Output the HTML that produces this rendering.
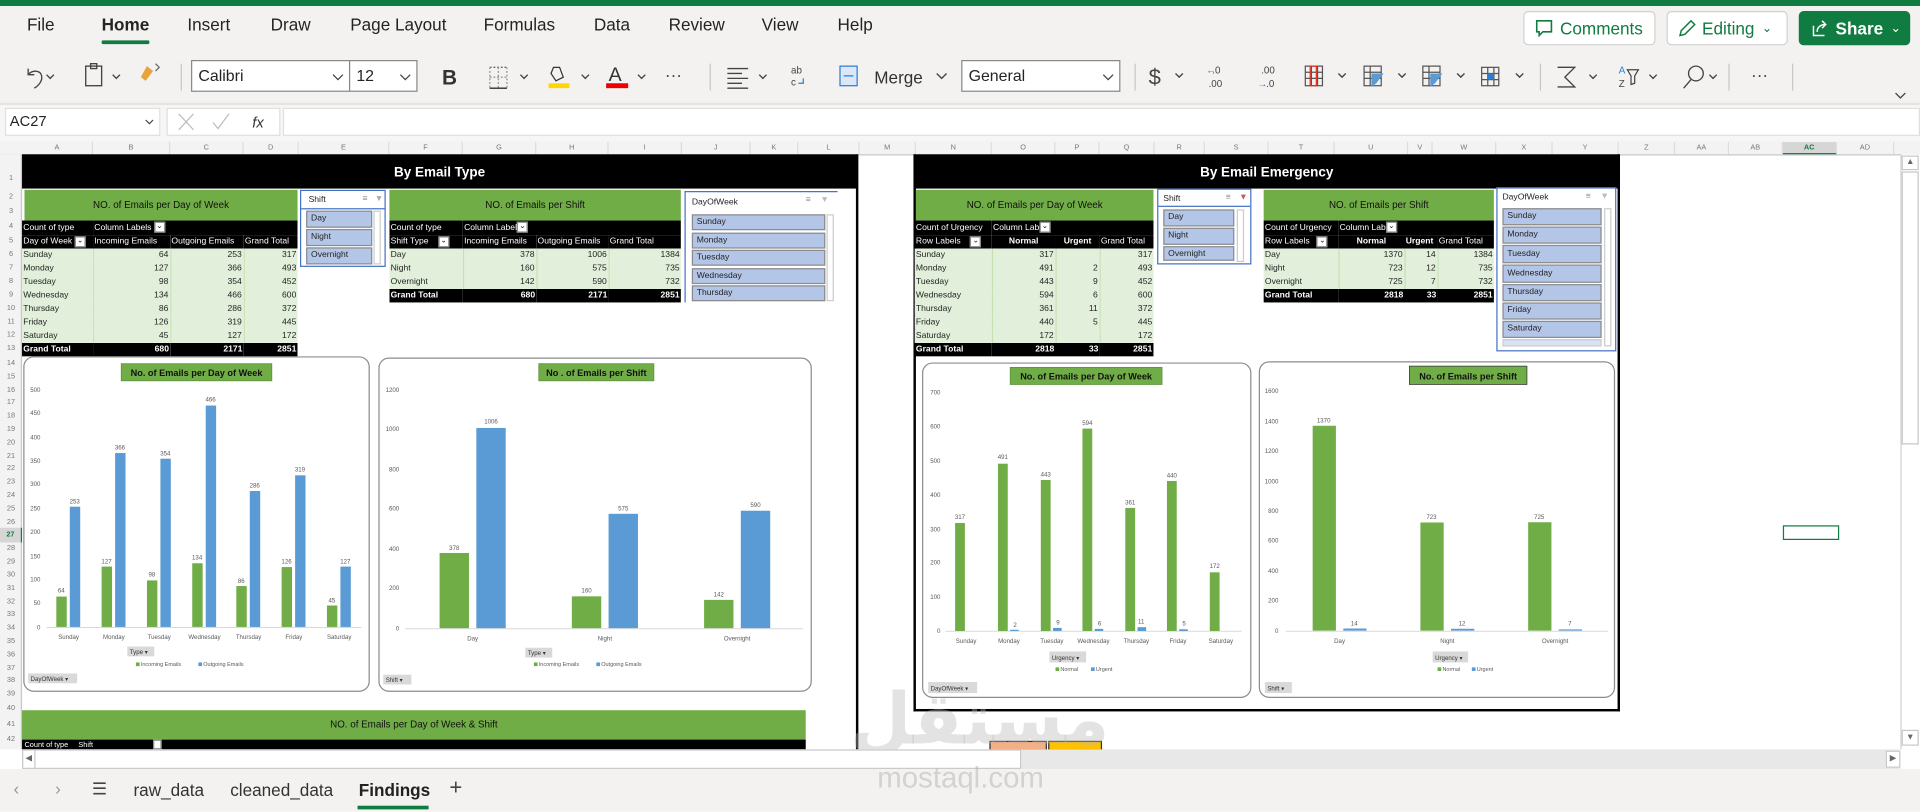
<!DOCTYPE html>
<html><head><meta charset="utf-8">
<style>
*{margin:0;padding:0;box-sizing:border-box}
html,body{width:1920px;height:812px;overflow:hidden;background:#fff}
#s{position:absolute;left:0;top:0;width:1568px;height:663px;transform:scale(1.22449);transform-origin:0 0;font-family:"Liberation Sans",sans-serif;color:#242424;overflow:hidden;background:#fff}
.a{position:absolute}
.tab{position:absolute;top:12px;font-size:14px;color:#242424}
.btn{position:absolute;top:9px;height:28px;border:1px solid #d1d1d1;border-radius:4px;background:#fff;font-size:14px;color:#107c41;display:flex;align-items:center;padding-left:8px}
.box{position:absolute;background:#fff;border:1px solid #8a8886;font-size:13px;padding-left:5px;line-height:24px}
.ch{position:absolute;top:116px;height:10px;font-size:6px;color:#777;text-align:center;line-height:10px;border-right:1px solid #dcdcdc}
.rh{position:absolute;left:0;width:18px;font-size:6px;color:#777;text-align:center}
table.pv{position:absolute;border-collapse:collapse;table-layout:fixed;font-size:7px}
table.pv td{height:11px;line-height:11px;padding:0 1px;white-space:nowrap;overflow:hidden}
tr.h td{background:#000;color:#fff}
tr.d td{background:#e2efda;border-left:1px solid #c6e0b4}
tr.d td:first-child{border-left:none}
tr.g td{background:#000;color:#fff;font-weight:bold}
td.r{text-align:right}
.dd{display:inline-block;width:9px;height:9px;background:#fff;border:1px solid #888;vertical-align:middle;font-size:6px;color:#000;text-align:center;line-height:7px}
.gh{position:absolute;background:#70ad47;font-size:8px;color:#111;text-align:center}
.sl{position:absolute;background:#fff;border:1px solid #4472c4;font-size:7px}
.si{position:absolute;background:#b4c6e7;border:1px solid #8c8c8c;font-size:7px;padding-left:3px;color:#222}
svg text{font-family:"Liberation Sans",sans-serif}
</style></head><body>
<div id="s">
<div class="a" style="left:0;top:0;width:1568px;height:5px;background:#107c41"></div>
<div class="a" style="left:0;top:5px;width:1568px;height:80px;background:#f3f2f1"></div>
<div class="a" style="left:0;top:84px;width:1568px;height:2px;background:#e6e4e2"></div>
<div class="a" style="left:0;top:86px;width:1568px;height:30px;background:#f6f6f6"></div>
<div class="tab" style="left:22px">File</div>
<div class="tab" style="left:83px;font-weight:bold">Home</div>
<div class="a" style="left:83px;top:33px;width:39px;height:3px;background:#107c41;border-radius:1px"></div>
<div class="tab" style="left:153px">Insert</div>
<div class="tab" style="left:221px">Draw</div>
<div class="tab" style="left:286px">Page Layout</div>
<div class="tab" style="left:395px">Formulas</div>
<div class="tab" style="left:485px">Data</div>
<div class="tab" style="left:546px">Review</div>
<div class="tab" style="left:622px">View</div>
<div class="tab" style="left:684px">Help</div>
<div class="btn" style="left:1244px;width:108px"><svg width="16" height="16" viewBox="0 0 16 16"><path d="M2 2h12v9H7l-3 3v-3H2z" fill="none" stroke="#107c41" stroke-width="1.3"/></svg><span style="margin-left:5px">Comments</span></div>
<div class="btn" style="left:1361px;width:99px"><svg width="16" height="16" viewBox="0 0 16 16"><path d="M11 2l3 3-8 8-4 1 1-4z" fill="none" stroke="#107c41" stroke-width="1.2"/></svg><span style="margin-left:4px">Editing</span><span style="margin-left:6px;font-size:10px">&#8964;</span></div>
<div class="btn" style="left:1469px;width:91px;background:#107c41;color:#fff;border-color:#107c41;font-weight:bold"><svg width="16" height="16" viewBox="0 0 16 16"><path d="M3 6v8h9M6 11c0-4 3-6 7-6M10 2l3 3-3 3" fill="none" stroke="#fff" stroke-width="1.2"/></svg><span style="margin-left:5px">Share</span><span style="margin-left:6px;font-size:10px;font-weight:normal">&#8964;</span></div>

<svg class="a" style="left:0;top:44px" width="1568" height="40" viewBox="0 44 1568 40">
<g fill="none" stroke="#444" stroke-width="1.1">
<path d="M23 56v5h5M23 61c3-4 10-4 11 1s-4 9-6 10"/>
<path d="M38 61l3 3 3-3M92 61l3 3 3-3M425 61l3 3 3-3M475 61l3 3 3-3M521 61l3 3 3-3M620 61l3 3 3-3M765 60l4 4 4-4M960 60l3 3 3-3M1093 60l3 3 3-3M1142 60l3 3 3-3M1190 60l3 3 3-3M1238 60l3 3 3-3M1298 61l3 3 3-3M1347 61l3 3 3-3M1396 61l3 3 3-3M1548 76l4 4 4-4M1556 98l4 4 4-4"/>
<rect x="70" y="54" width="13" height="16"/><rect x="74" y="52" width="5" height="4"/>
<path d="M400 55h14M400 72h14" stroke="#666" stroke-dasharray="1.5 1.5"/><path d="M400 55v17M414 55v17M407 55v17M400 63h14" stroke="#999" stroke-dasharray="1.5 1.5"/><path d="M400 72h14" stroke="#333"/>
<path d="M594 56h17M594 60h12M594 64h17M594 68h12M594 72h17"/>
<path d="M1272 55h14l-8 8 8 8h-14" />
<circle cx="1385" cy="60" r="6"/><path d="M1381 65l-6 7"/>
</g>
<path d="M120 54l5 4-6 8-4-3z" fill="#e8a33a"/><path d="M127 52l3 3-3 3" stroke="#666" fill="none"/>
<rect x="448" y="68" width="17" height="4" fill="#ffd700"/><path d="M452 55l5 0 3 8-6 3-4-6z" fill="none" stroke="#333"/>
<rect x="495" y="68" width="18" height="4" fill="#e00"/>
<text x="497" y="66" font-size="16" fill="#333">A</text>
<text x="361" y="69" font-size="17" font-weight="bold" fill="#333">B</text>
<text x="543" y="66" font-size="14" fill="#444">&#183;&#183;&#183;</text>
<text x="1430" y="66" font-size="14" fill="#444">&#183;&#183;&#183;</text>
<text x="646" y="60" font-size="8" fill="#444">ab</text><text x="646" y="70" font-size="8" fill="#444">c</text><path d="M656 64v4h-4" stroke="#2b7cd3" fill="none"/>
<rect x="686" y="54" width="14" height="16" fill="#dce8f7" stroke="#2b7cd3"/><path d="M689 62h8" stroke="#2b7cd3"/>
<text x="714" y="68" font-size="14" fill="#333">Merge</text>
<text x="938" y="69" font-size="18" fill="#444">$</text>
<text x="985" y="60" font-size="8" fill="#2b7cd3">&#8592;</text><text x="990" y="60" font-size="8" fill="#444">.0</text><text x="987" y="71" font-size="8" fill="#444">.00</text>
<text x="1030" y="60" font-size="8" fill="#444">.00</text><text x="1027" y="71" font-size="8" fill="#2b7cd3">&#8594;</text><text x="1034" y="71" font-size="8" fill="#444">.0</text>
<g stroke="#555" fill="none"><rect x="1066" y="54" width="14" height="16"/><path d="M1066 59h14M1066 64h14M1071 54v16M1076 54v16"/></g><rect x="1070" y="54" width="5" height="16" fill="none" stroke="#e0301e"/>
<g stroke="#555" fill="none"><rect x="1114" y="54" width="14" height="16"/><path d="M1114 59h14M1114 64h14M1119 54v16"/></g><path d="M1120 60l10 0-6 8-4 3z" fill="#5b9bd5"/>
<g stroke="#555" fill="none"><rect x="1162" y="54" width="14" height="16"/><path d="M1162 59h14M1162 64h14M1167 54v16"/></g><path d="M1168 60l10 0-6 8-4 3z" fill="#5b9bd5"/>
<g stroke="#555" fill="none"><rect x="1210" y="55" width="14" height="15"/><path d="M1210 60h14M1210 65h14M1215 55v15M1220 55v15"/></g><rect x="1215" y="60" width="5" height="5" fill="#2b7cd3"/>
<text x="1322" y="60" font-size="8" fill="#2b7cd3">A</text><text x="1322" y="71" font-size="8" fill="#444">Z</text><path d="M1329 57h9l-3 5v6l-3 1v-7z" fill="none" stroke="#444"/>
<g stroke="#c8c6c4"><path d="M148 52v22M580 52v22M927 52v22M1258 52v22M1412 52v22M1464 52v22"/></g>
</svg>
<div class="box" style="left:156px;top:49px;width:130px;height:26px">Calibri<svg class="a" style="right:4px;top:8px" width="10" height="10"><path d="M1 3l4 4 4-4" stroke="#444" fill="none"/></svg></div>
<div class="box" style="left:285px;top:49px;width:56px;height:26px">12<svg class="a" style="right:4px;top:8px" width="10" height="10"><path d="M1 3l4 4 4-4" stroke="#444" fill="none"/></svg></div>
<div class="box" style="left:785px;top:49px;width:130px;height:26px">General<svg class="a" style="right:4px;top:8px" width="10" height="10"><path d="M1 3l4 4 4-4" stroke="#444" fill="none"/></svg></div>

<div class="a" style="left:4px;top:88px;width:127px;height:23px;background:#fff;border:1px solid #e1dfdd;font-size:12px;line-height:21px;padding-left:3px">AC27<svg class="a" style="right:4px;top:7px" width="8" height="8"><path d="M1 2l3 3 3-3" stroke="#444" fill="none"/></svg></div>
<div class="a" style="left:136px;top:88px;width:93px;height:23px;background:#fff;border:1px solid #e1dfdd"></div>
<svg class="a" style="left:136px;top:88px" width="93" height="23"><path d="M10 5l12 13M22 5l-12 13M38 12l4 5 9-12" stroke="#bbb" fill="none"/><text x="70" y="16" font-size="12" font-style="italic" font-family="Liberation Serif" fill="#333">fx</text></svg>
<div class="a" style="left:231px;top:88px;width:1337px;height:23px;background:#fff;border:1px solid #e1dfdd"></div>

<div class="a" style="left:0;top:115px;width:1568px;height:12px;background:#f3f3f3;border-bottom:1px solid #c8c8c8"></div>
<div class="ch" style="left:18px;width:58px">A</div><div class="ch" style="left:76px;width:63px">B</div><div class="ch" style="left:139px;width:60px">C</div><div class="ch" style="left:199px;width:45px">D</div><div class="ch" style="left:244px;width:74px">E</div><div class="ch" style="left:318px;width:60px">F</div><div class="ch" style="left:378px;width:60px">G</div><div class="ch" style="left:438px;width:59px">H</div><div class="ch" style="left:497px;width:60px">I</div><div class="ch" style="left:557px;width:56px">J</div><div class="ch" style="left:613px;width:39px">K</div><div class="ch" style="left:652px;width:50px">L</div><div class="ch" style="left:702px;width:46px">M</div><div class="ch" style="left:748px;width:62px">N</div><div class="ch" style="left:810px;width:52px">O</div><div class="ch" style="left:862px;width:36px">P</div><div class="ch" style="left:898px;width:45px">Q</div><div class="ch" style="left:943px;width:41px">R</div><div class="ch" style="left:984px;width:52px">S</div><div class="ch" style="left:1036px;width:54px">T</div><div class="ch" style="left:1090px;width:60px">U</div><div class="ch" style="left:1150px;width:20px">V</div><div class="ch" style="left:1170px;width:52px">W</div><div class="ch" style="left:1222px;width:46px">X</div><div class="ch" style="left:1268px;width:54px">Y</div><div class="ch" style="left:1322px;width:46px">Z</div><div class="ch" style="left:1368px;width:44px">AA</div><div class="ch" style="left:1412px;width:44px">AB</div><div class="ch" style="left:1456px;width:44px;background:#d6d6d6;color:#107c41;font-weight:bold;border-bottom:1px solid #107c41">AC</div><div class="ch" style="left:1500px;width:47px">AD</div>

<div class="a" style="left:0;top:126px;width:18px;height:486px;background:#f3f3f3;border-right:1px solid #c8c8c8"></div>
<div class="rh" style="top:143px">1</div><div class="rh" style="top:158px">2</div><div class="rh" style="top:170px">3</div><div class="rh" style="top:182px">4</div><div class="rh" style="top:194px">5</div><div class="rh" style="top:205px">6</div><div class="rh" style="top:216px">7</div><div class="rh" style="top:227px">8</div><div class="rh" style="top:238px">9</div><div class="rh" style="top:249px">10</div><div class="rh" style="top:260px">11</div><div class="rh" style="top:271px">12</div><div class="rh" style="top:282px">13</div>
<div class="rh" style="top:294px">14</div><div class="rh" style="top:305px">15</div><div class="rh" style="top:316px">16</div><div class="rh" style="top:326px">17</div><div class="rh" style="top:337px">18</div><div class="rh" style="top:348px">19</div><div class="rh" style="top:359px">20</div><div class="rh" style="top:370px">21</div><div class="rh" style="top:380px">22</div><div class="rh" style="top:391px">23</div><div class="rh" style="top:402px">24</div><div class="rh" style="top:413px">25</div><div class="rh" style="top:424px">26</div><div class="rh" style="top:431px;height:12px;line-height:12px;background:#d6d6d6;color:#107c41;font-weight:bold;border-right:1px solid #107c41">27</div><div class="rh" style="top:445px">28</div><div class="rh" style="top:456px">29</div><div class="rh" style="top:467px">30</div><div class="rh" style="top:478px">31</div><div class="rh" style="top:489px">32</div><div class="rh" style="top:499px">33</div><div class="rh" style="top:510px">34</div><div class="rh" style="top:521px">35</div><div class="rh" style="top:532px">36</div><div class="rh" style="top:543px">37</div><div class="rh" style="top:553px">38</div><div class="rh" style="top:564px">39</div><div class="rh" style="top:576px">40</div><div class="rh" style="top:589px">41</div><div class="rh" style="top:601px">42</div>

<div class="a" style="left:18px;top:126px;width:682px;height:28px;background:#000;color:#fff;font-weight:bold;font-size:11px;text-align:center;line-height:30px">By Email Type</div>
<div class="a" style="left:699px;top:126px;width:2px;height:486px;background:#000"></div>
<div class="gh" style="left:20px;top:155px;width:223px;height:25px;line-height:25px">NO. of Emails per Day of Week</div>
<table class="pv" style="left:18px;top:180px;width:225px">
<colgroup><col style="width:58px"><col style="width:63px"><col style="width:60px"><col style="width:44px"></colgroup>
<tr class="h"><td style="height:12px">Count of type</td><td colspan="3">Column Labels <span class="dd">&#8964;</span></td></tr>
<tr class="h"><td>Day of Week <span class="dd">&#8964;</span></td><td>Incoming Emails</td><td>Outgoing Emails</td><td>Grand Total</td></tr>
<tr class="d"><td>Sunday</td><td class="r">64</td><td class="r">253</td><td class="r">317</td></tr>
<tr class="d"><td>Monday</td><td class="r">127</td><td class="r">366</td><td class="r">493</td></tr>
<tr class="d"><td>Tuesday</td><td class="r">98</td><td class="r">354</td><td class="r">452</td></tr>
<tr class="d"><td>Wednesday</td><td class="r">134</td><td class="r">466</td><td class="r">600</td></tr>
<tr class="d"><td>Thursday</td><td class="r">86</td><td class="r">286</td><td class="r">372</td></tr>
<tr class="d"><td>Friday</td><td class="r">126</td><td class="r">319</td><td class="r">445</td></tr>
<tr class="d"><td>Saturday</td><td class="r">45</td><td class="r">127</td><td class="r">172</td></tr>
<tr class="g"><td>Grand Total</td><td class="r">680</td><td class="r">2171</td><td class="r">2851</td></tr>
</table>
<div class="sl" style="left:245px;top:155px;width:70px;height:63px"><span class="a" style="left:6px;top:4px">Shift</span><span class="a" style="left:50px;top:3px;color:#888">&#8801;</span><span class="a" style="left:60px;top:3px;color:#aaa">&#9660;</span>
<div class="a" style="left:0;top:14px;width:68px;border-top:1px solid #4472c4"></div>
<div class="si" style="left:4px;top:16px;width:54px;height:14px;line-height:12px">Day</div><div class="si" style="left:4px;top:31px;width:54px;height:14px;line-height:12px">Night</div><div class="si" style="left:4px;top:46px;width:54px;height:14px;line-height:12px">Overnight</div>
<div class="a" style="left:59px;top:16px;width:6px;height:44px;border:1px solid #ccc"></div></div>
<div class="gh" style="left:318px;top:155px;width:238px;height:25px;line-height:25px">NO. of Emails per Shift</div>
<table class="pv" style="left:318px;top:180px;width:238px">
<colgroup><col style="width:60px"><col style="width:60px"><col style="width:59px"><col style="width:59px"></colgroup>
<tr class="h"><td style="height:12px">Count of type</td><td colspan="3">Column Label<span class="dd">&#8964;</span></td></tr>
<tr class="h"><td>Shift Type &nbsp;&nbsp;&nbsp;<span class="dd">&#8964;</span></td><td>Incoming Emails</td><td>Outgoing Emails</td><td>Grand Total</td></tr>
<tr class="d"><td>Day</td><td class="r">378</td><td class="r">1006</td><td class="r">1384</td></tr>
<tr class="d"><td>Night</td><td class="r">160</td><td class="r">575</td><td class="r">735</td></tr>
<tr class="d"><td>Overnight</td><td class="r">142</td><td class="r">590</td><td class="r">732</td></tr>
<tr class="g"><td>Grand Total</td><td class="r">680</td><td class="r">2171</td><td class="r">2851</td></tr>
</table>
<div class="sl" style="left:559px;top:156px;width:125px;height:91px;border-bottom:none;border-right:none"><span class="a" style="left:5px;top:5px">DayOfWeek</span><span class="a" style="left:98px;top:3px;color:#888">&#8801;</span><span class="a" style="left:110px;top:3px;color:#bbb">&#9660;</span>
<div class="si" style="left:5px;top:18px;width:109px;height:13px;line-height:11px">Sunday</div><div class="si" style="left:5px;top:33px;width:109px;height:13px;line-height:11px">Monday</div><div class="si" style="left:5px;top:47px;width:109px;height:13px;line-height:11px">Tuesday</div><div class="si" style="left:5px;top:62px;width:109px;height:13px;line-height:11px">Wednesday</div><div class="si" style="left:5px;top:76px;width:109px;height:13px;line-height:11px">Thursday</div>
<div class="a" style="left:115px;top:18px;width:6px;height:71px;border:1px solid #ccc"></div></div>

<div class="gh" style="left:18px;top:580px;width:640px;height:24px;line-height:24px">NO. of Emails per Day of Week &amp; Shift</div>
<div class="a" style="left:18px;top:604px;width:640px;height:8px;background:#000;color:#fff;font-size:6px;line-height:10px;padding-left:2px">Count of type &nbsp;&nbsp;&nbsp;&nbsp;Shift</div>
<div class="a" style="left:125px;top:604px;width:7px;height:8px;background:#fff;border:1px solid #888"></div>

<div class="a" style="left:746px;top:126px;width:577px;height:455px;border:2px solid #000;border-top:none"></div>
<div class="a" style="left:746px;top:126px;width:577px;height:28px;background:#000;color:#fff;font-weight:bold;font-size:11px;text-align:center;line-height:30px">By Email Emergency</div>
<div class="gh" style="left:748px;top:155px;width:194px;height:25px;line-height:25px">NO. of Emails per Day of Week</div>
<table class="pv" style="left:747px;top:180px;width:195px">
<colgroup><col style="width:63px"><col style="width:52px"><col style="width:36px"><col style="width:44px"></colgroup>
<tr class="h"><td style="height:12px">Count of Urgency</td><td colspan="3">Column Lab<span class="dd">&#8964;</span></td></tr>
<tr class="h"><td>Row Labels &nbsp;&nbsp;&nbsp;<span class="dd">&#8964;</span></td><td style="text-align:center;font-weight:bold">Normal</td><td style="text-align:center;font-weight:bold">Urgent</td><td>Grand Total</td></tr>
<tr class="d"><td>Sunday</td><td class="r">317</td><td class="r"></td><td class="r">317</td></tr>
<tr class="d"><td>Monday</td><td class="r">491</td><td class="r">2</td><td class="r">493</td></tr>
<tr class="d"><td>Tuesday</td><td class="r">443</td><td class="r">9</td><td class="r">452</td></tr>
<tr class="d"><td>Wednesday</td><td class="r">594</td><td class="r">6</td><td class="r">600</td></tr>
<tr class="d"><td>Thursday</td><td class="r">361</td><td class="r">11</td><td class="r">372</td></tr>
<tr class="d"><td>Friday</td><td class="r">440</td><td class="r">5</td><td class="r">445</td></tr>
<tr class="d"><td>Saturday</td><td class="r">172</td><td class="r"></td><td class="r">172</td></tr>
<tr class="g"><td>Grand Total</td><td class="r">2818</td><td class="r">33</td><td class="r">2851</td></tr>
</table>
<div class="sl" style="left:945px;top:154px;width:77px;height:62px"><span class="a" style="left:4px;top:4px">Shift</span><span class="a" style="left:55px;top:3px;color:#888">&#8801;</span><span class="a" style="left:66px;top:3px;color:#c55">&#9660;</span>
<div class="a" style="left:0;top:13px;width:75px;border-top:1px solid #4472c4"></div>
<div class="si" style="left:4px;top:16px;width:58px;height:14px;line-height:12px">Day</div><div class="si" style="left:4px;top:31px;width:58px;height:14px;line-height:12px">Night</div><div class="si" style="left:4px;top:46px;width:58px;height:12px;line-height:12px">Overnight</div>
<div class="a" style="left:64px;top:16px;width:6px;height:43px;border:1px solid #ccc"></div></div>
<div class="gh" style="left:1032px;top:155px;width:188px;height:25px;line-height:25px">NO. of Emails per Shift</div>
<table class="pv" style="left:1032px;top:180px;width:188px">
<colgroup><col style="width:61px"><col style="width:54px"><col style="width:27px"><col style="width:46px"></colgroup>
<tr class="h"><td style="height:12px">Count of Urgency</td><td colspan="3">Column Lab<span class="dd">&#8964;</span></td></tr>
<tr class="h"><td>Row Labels &nbsp;&nbsp;<span class="dd">&#8964;</span></td><td style="text-align:center;font-weight:bold">Normal</td><td style="font-weight:bold">Urgent</td><td>Grand Total</td></tr>
<tr class="d"><td>Day</td><td class="r">1370</td><td class="r">14</td><td class="r">1384</td></tr>
<tr class="d"><td>Night</td><td class="r">723</td><td class="r">12</td><td class="r">735</td></tr>
<tr class="d"><td>Overnight</td><td class="r">725</td><td class="r">7</td><td class="r">732</td></tr>
<tr class="g"><td>Grand Total</td><td class="r">2818</td><td class="r">33</td><td class="r">2851</td></tr>
</table>
<div class="sl" style="left:1222px;top:153px;width:98px;height:134px"><span class="a" style="left:4px;top:4px">DayOfWeek</span><span class="a" style="left:72px;top:3px;color:#888">&#8801;</span><span class="a" style="left:84px;top:3px;color:#bbb">&#9660;</span>
<div class="si" style="left:4px;top:16px;width:81px;height:14px;line-height:12px">Sunday</div><div class="si" style="left:4px;top:31px;width:81px;height:14px;line-height:12px">Monday</div><div class="si" style="left:4px;top:46px;width:81px;height:15px;line-height:13px">Tuesday</div><div class="si" style="left:4px;top:62px;width:81px;height:15px;line-height:13px">Wednesday</div><div class="si" style="left:4px;top:78px;width:81px;height:14px;line-height:12px">Thursday</div><div class="si" style="left:4px;top:93px;width:81px;height:14px;line-height:12px">Friday</div><div class="si" style="left:4px;top:108px;width:81px;height:14px;line-height:12px">Saturday</div><div class="si" style="left:4px;top:123px;width:81px;height:6px;background:#dae3f3;border-color:#ccc"></div>
<div class="a" style="left:87px;top:16px;width:6px;height:113px;border:1px solid #ccc"></div></div>

<svg class="a" style="left:0;top:0" width="1568" height="663" viewBox="0 0 1568 663">
<g fill="#fff" stroke="#8c8c8c" stroke-width="1">
<rect x="19.5" y="291.5" width="282" height="273" rx="8"/>
<rect x="309.5" y="292.5" width="353" height="272" rx="8"/>
<rect x="753.5" y="296.5" width="268" height="273" rx="8"/>
<rect x="1028.5" y="295.5" width="290" height="274" rx="8"/>
</g>
<g fill="#70ad47" stroke="#5a8f3a" stroke-width="0.6">
<rect x="99" y="297" width="123" height="14"/><rect x="440" y="297" width="94" height="14"/>
<rect x="825" y="300" width="124" height="14"/><rect x="1151" y="299" width="96" height="15" stroke="#333"/>
</g>
<g font-size="7.5" font-weight="bold" fill="#111" text-anchor="middle">
<text x="160.5" y="307">No. of Emails per Day of Week</text><text x="487" y="307">No . of Emails per Shift</text>
<text x="887" y="310">No. of Emails per Day of Week</text><text x="1199" y="310">No. of Emails per Shift</text>
</g>
<g stroke="#d9d9d9" stroke-width="0.8"><path d="M38 512.5h257M331 513.5h325M772 515.5h242M1050 515.5h263"/></g>
<g font-size="5" fill="#595959" text-anchor="end">
<text x="33" y="320">500</text><text x="33" y="339">450</text><text x="33" y="359">400</text><text x="33" y="378">350</text><text x="33" y="397">300</text><text x="33" y="417">250</text><text x="33" y="436">200</text><text x="33" y="456">150</text><text x="33" y="475">100</text><text x="33" y="494">50</text><text x="33" y="514">0</text>
<text x="326" y="320">1200</text><text x="326" y="352">1000</text><text x="326" y="385">800</text><text x="326" y="417">600</text><text x="326" y="450">400</text><text x="326" y="482">200</text><text x="326" y="515">0</text>
<text x="768" y="322">700</text><text x="768" y="350">600</text><text x="768" y="378">500</text><text x="768" y="406">400</text><text x="768" y="434">300</text><text x="768" y="461">200</text><text x="768" y="489">100</text><text x="768" y="517">0</text>
<text x="1044" y="321">1600</text><text x="1044" y="346">1400</text><text x="1044" y="370">1200</text><text x="1044" y="395">1000</text><text x="1044" y="419">800</text><text x="1044" y="443">600</text><text x="1044" y="468">400</text><text x="1044" y="492">200</text><text x="1044" y="517">0</text>
</g>
<g fill="#70ad47">
<rect x="46" y="487.2" width="8.5" height="24.8"/><rect x="83" y="462.7" width="8.5" height="49.3"/><rect x="120" y="474" width="8.5" height="38"/><rect x="157" y="460" width="8.5" height="52"/><rect x="193" y="478.6" width="8.5" height="33.4"/><rect x="230" y="463.1" width="8.5" height="48.9"/><rect x="267" y="494.5" width="8.5" height="17.5"/>
<rect x="359" y="451.6" width="24" height="61.4"/><rect x="467" y="487" width="24" height="26"/><rect x="575" y="489.9" width="24" height="23.1"/>
<rect x="780" y="427.1" width="8" height="88.2"/><rect x="815" y="378.7" width="8" height="136.6"/><rect x="850" y="392" width="8" height="123.3"/><rect x="884" y="350" width="8" height="165.3"/><rect x="919" y="414.8" width="8" height="100.5"/><rect x="953" y="392.8" width="8" height="122.5"/><rect x="988" y="467.4" width="8" height="47.9"/>
<rect x="1072" y="347.7" width="19" height="167.3"/><rect x="1160" y="426.7" width="19" height="88.3"/><rect x="1248" y="426.5" width="19" height="88.5"/>
</g>
<g fill="#5b9bd5">
<rect x="57" y="413.8" width="8.5" height="98.2"/><rect x="94" y="370" width="8.5" height="142"/><rect x="131" y="374.6" width="8.5" height="137.4"/><rect x="168" y="331.2" width="8.5" height="180.8"/><rect x="204" y="401" width="8.5" height="111"/><rect x="241" y="388.2" width="8.5" height="123.8"/><rect x="278" y="462.7" width="8.5" height="49.3"/>
<rect x="389" y="349.5" width="24" height="163.5"/><rect x="497" y="419.6" width="24" height="93.4"/><rect x="605" y="417.1" width="24" height="95.9"/>
<rect x="825" y="514.3" width="7" height="1"/><rect x="860" y="512.8" width="7" height="2.5"/><rect x="894" y="513.6" width="7" height="1.7"/><rect x="929" y="512.2" width="7" height="3.1"/><rect x="963" y="513.9" width="7" height="1.4"/>
<rect x="1097" y="513.3" width="19" height="1.7"/><rect x="1185" y="513.5" width="19" height="1.5"/><rect x="1273" y="514" width="19" height="1"/>
</g>
<g font-size="5" fill="#595959" text-anchor="middle">
<text x="50" y="484">64</text><text x="61" y="411">253</text><text x="87" y="460">127</text><text x="98" y="367">366</text><text x="124" y="471">98</text><text x="135" y="372">354</text><text x="161" y="457">134</text><text x="172" y="328">466</text><text x="197" y="476">86</text><text x="208" y="398">286</text><text x="234" y="460">126</text><text x="245" y="385">319</text><text x="271" y="492">45</text><text x="282" y="460">127</text>
<text x="371" y="449">378</text><text x="401" y="346">1006</text><text x="479" y="484">160</text><text x="509" y="417">575</text><text x="587" y="487">142</text><text x="617" y="414">590</text>
<text x="784" y="424">317</text><text x="819" y="375">491</text><text x="829" y="512">2</text><text x="854" y="389">443</text><text x="864" y="510">9</text><text x="888" y="347">594</text><text x="898" y="511">6</text><text x="923" y="412">361</text><text x="932" y="509">11</text><text x="957" y="390">440</text><text x="967" y="511">5</text><text x="992" y="464">172</text>
<text x="1081" y="345">1370</text><text x="1106" y="511">14</text><text x="1169" y="424">723</text><text x="1194" y="511">12</text><text x="1257" y="424">725</text><text x="1282" y="511">7</text>
<text x="56" y="522">Sunday</text><text x="93" y="522">Monday</text><text x="130" y="522">Tuesday</text><text x="167" y="522">Wednesday</text><text x="203" y="522">Thursday</text><text x="240" y="522">Friday</text><text x="277" y="522">Saturday</text>
<text x="386" y="523">Day</text><text x="494" y="523">Night</text><text x="602" y="523">Overnight</text>
<text x="789" y="525">Sunday</text><text x="824" y="525">Monday</text><text x="859" y="525">Tuesday</text><text x="893" y="525">Wednesday</text><text x="928" y="525">Thursday</text><text x="962" y="525">Friday</text><text x="997" y="525">Saturday</text>
<text x="1094" y="525">Day</text><text x="1182" y="525">Night</text><text x="1270" y="525">Overnight</text>
</g>
<g fill="#d9d9d9"><rect x="104" y="528" width="22" height="8"/><rect x="429" y="529" width="22" height="8"/><rect x="23" y="550" width="40" height="8"/><rect x="313" y="551" width="23" height="8"/>
<rect x="857" y="532" width="30" height="9"/><rect x="1170" y="532" width="29" height="9"/><rect x="758" y="557" width="40" height="9"/><rect x="1033" y="557" width="22" height="9"/></g>
<g font-size="5" fill="#333"><text x="106" y="534">Type ▾</text><text x="431" y="535">Type ▾</text><text x="25" y="556">DayOfWeek ▾</text><text x="315" y="557">Shift ▾</text>
<text x="859" y="539">Urgency ▾</text><text x="1172" y="539">Urgency ▾</text><text x="760" y="564">DayOfWeek ▾</text><text x="1035" y="564">Shift ▾</text></g>
<g font-size="4.5" fill="#595959">
<rect x="111" y="541" width="3" height="3" fill="#70ad47"/><text x="115" y="544">Incoming Emails</text><rect x="162" y="541" width="3" height="3" fill="#5b9bd5"/><text x="166" y="544">Outgoing Emails</text>
<rect x="436" y="541" width="3" height="3" fill="#70ad47"/><text x="440" y="544">Incoming Emails</text><rect x="487" y="541" width="3" height="3" fill="#5b9bd5"/><text x="491" y="544">Outgoing Emails</text>
<rect x="862" y="545" width="3" height="3" fill="#70ad47"/><text x="866" y="548">Normal</text><rect x="891" y="545" width="3" height="3" fill="#5b9bd5"/><text x="895" y="548">Urgent</text>
<rect x="1174" y="545" width="3" height="3" fill="#70ad47"/><text x="1178" y="548">Normal</text><rect x="1202" y="545" width="3" height="3" fill="#5b9bd5"/><text x="1206" y="548">Urgent</text>
</g>
</svg>

<div class="a" style="left:1456px;top:429px;width:46px;height:12px;border:1.5px solid #107c41"></div>

<div class="a" style="left:808px;top:605px;width:47px;height:8px;background:#f4b084;border:1px solid #333"></div>
<div class="a" style="left:856px;top:605px;width:44px;height:8px;background:#ffc000;border:1px solid #333"></div>
<div class="a" style="left:694px;top:552px;width:180px;font-size:58px;line-height:70px;color:rgba(185,185,185,0.4);font-family:'DejaVu Sans',sans-serif;font-weight:bold;text-align:center">مستقل</div>

<div class="a" style="left:1552px;top:126px;width:16px;height:486px;background:#fff;border-left:1px solid #d0d0d0"></div>
<div class="a" style="left:1553px;top:127px;width:14px;height:12px;border:1px solid #c8c8c8;font-size:7px;color:#666;text-align:center;line-height:10px">&#9650;</div>
<div class="a" style="left:1553px;top:140px;width:14px;height:223px;border:1px solid #c8c8c8"></div>
<div class="a" style="left:1553px;top:596px;width:14px;height:13px;border:1px solid #c8c8c8;font-size:7px;color:#666;text-align:center;line-height:11px">&#9660;</div>
<div class="a" style="left:18px;top:612px;width:1534px;height:16px;background:#e8e8e8"></div>
<div class="a" style="left:18px;top:612px;width:816px;height:16px;background:#fff;border:1px solid #c8c8c8"></div>
<div class="a" style="left:19px;top:613px;width:10px;height:14px;border-right:1px solid #c8c8c8;font-size:7px;color:#666;line-height:14px;text-align:center">&#9664;</div>
<div class="a" style="left:1540px;top:613px;width:12px;height:14px;background:#fff;border:1px solid #c8c8c8;font-size:7px;color:#666;line-height:12px;text-align:center">&#9654;</div>

<div class="a" style="left:0;top:628px;width:1568px;height:35px;background:#f3f2f1"></div>
<div class="a" style="left:11px;top:636px;font-size:14px;color:#999">&#8249;</div>
<div class="a" style="left:45px;top:636px;font-size:14px;color:#999">&#8250;</div>
<div class="a" style="left:75px;top:636px;font-size:14px;color:#444">&#9776;</div>
<div class="a" style="left:109px;top:637px;font-size:14px;color:#333">raw_data</div>
<div class="a" style="left:188px;top:637px;font-size:14px;color:#333">cleaned_data</div>
<div class="a" style="left:293px;top:637px;font-size:14px;color:#222;font-weight:bold">Findings</div>
<div class="a" style="left:292px;top:658px;width:58px;height:3px;background:#107c41"></div>
<div class="a" style="left:367px;top:633px;font-size:18px;color:#444">+</div>
<div class="a" style="left:697px;top:622px;width:175px;font-size:24px;color:rgba(170,170,170,0.45);text-align:center">mostaql.com</div>
</div>
</body></html>
